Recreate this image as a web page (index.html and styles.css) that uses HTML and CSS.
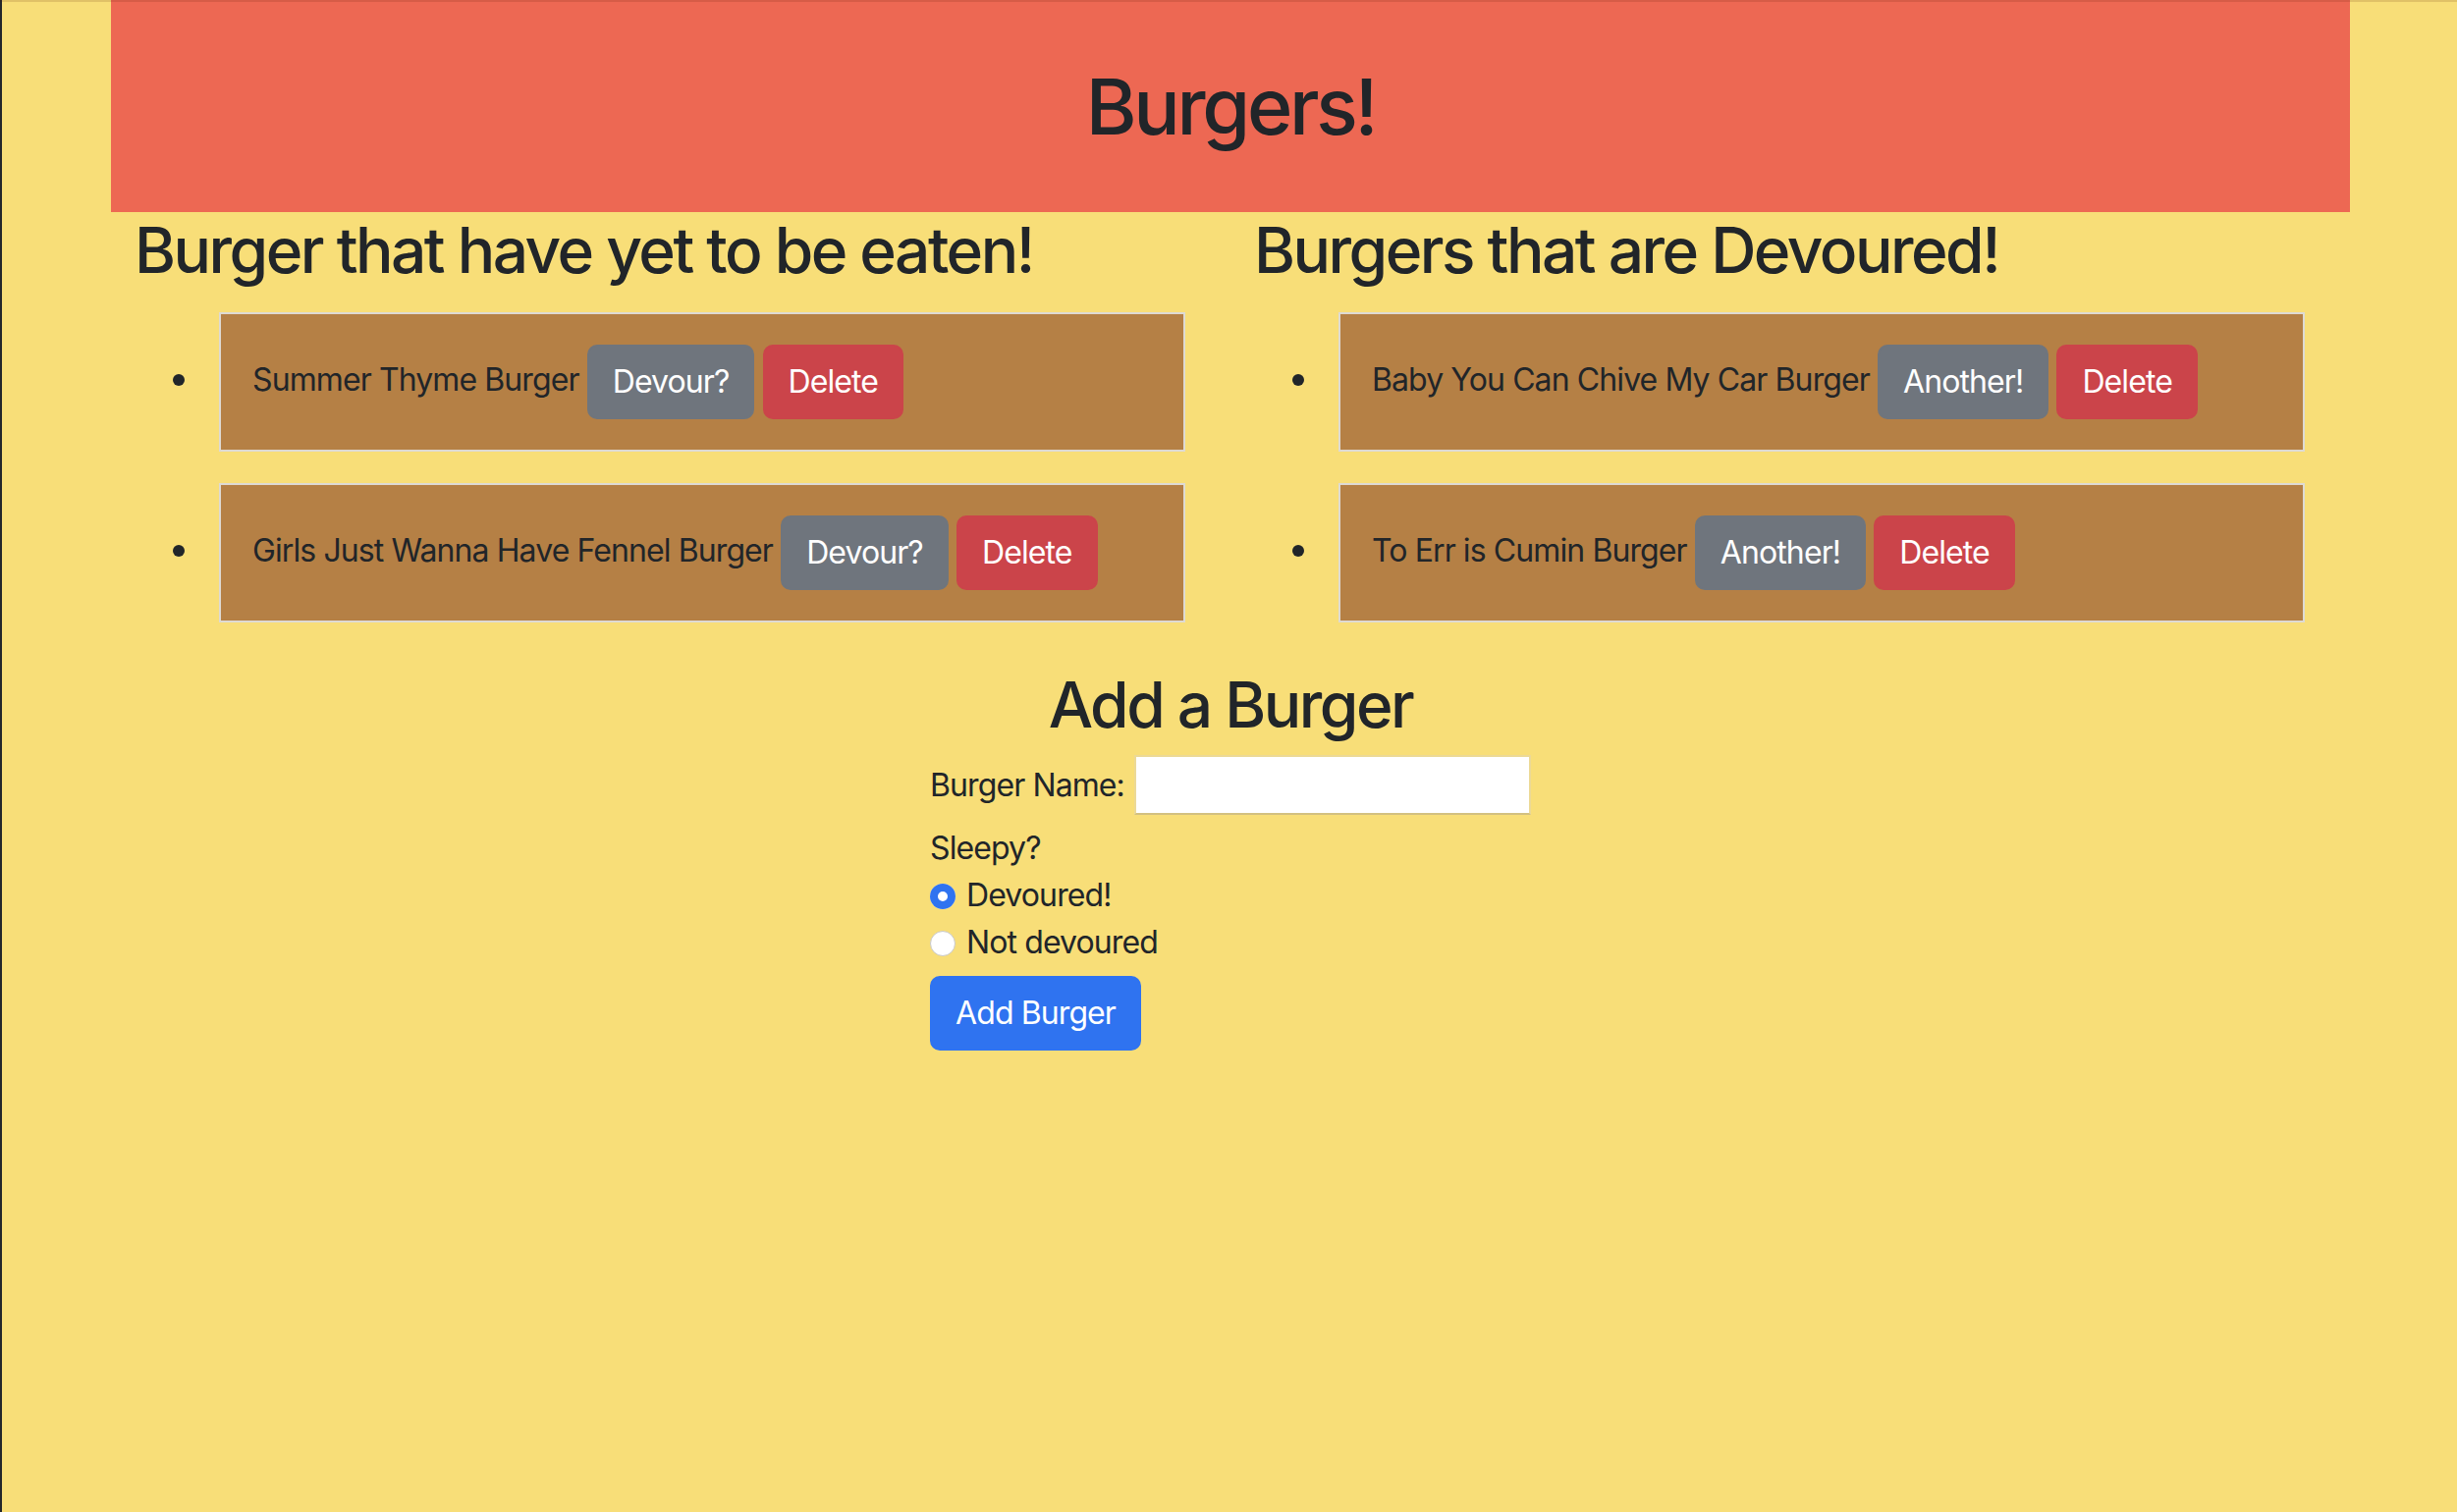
FILE: index.html
```html
<!DOCTYPE html>
<html lang="en">
<head>
<meta charset="utf-8">
<title>Burgers!</title>
<link rel="stylesheet" href="styles.css">
</head>
<body>
<div class="topline"></div>
<div class="container">
  <header class="jumbo">
    <h1 class="title">Burgers!</h1>
  </header>
  <div class="row">
    <section class="col">
      <h2 class="col-title">Burger that have yet to be eaten!</h2>
      <ul class="burger-list">
        <li><div class="burger">Summer Thyme Burger <button class="btn btn-secondary">Devour?</button> <button class="btn btn-danger">Delete</button></div></li>
        <li><div class="burger">Girls Just Wanna Have Fennel Burger <button class="btn btn-secondary">Devour?</button> <button class="btn btn-danger">Delete</button></div></li>
      </ul>
    </section>
    <section class="col">
      <h2 class="col-title">Burgers that are Devoured!</h2>
      <ul class="burger-list">
        <li><div class="burger">Baby You Can Chive My Car Burger <button class="btn btn-secondary">Another!</button> <button class="btn btn-danger">Delete</button></div></li>
        <li><div class="burger">To Err is Cumin Burger <button class="btn btn-secondary">Another!</button> <button class="btn btn-danger">Delete</button></div></li>
      </ul>
    </section>
  </div>
  <section class="add">
    <h2 class="add-title">Add a Burger</h2>
    <form class="add-form">
      <div class="name-row">
        <label class="name-label" for="bn">Burger Name:</label>
        <input class="name-input" id="bn" type="text">
      </div>
      <div class="line">Sleepy?</div>
      <div class="line"><input class="radio" type="radio" name="dev" id="d1" checked><label for="d1">Devoured!</label></div>
      <div class="line"><input class="radio" type="radio" name="dev" id="d2"><label for="d2">Not devoured</label></div>
      <button type="button" class="btn btn-primary add-btn">Add Burger</button>
    </form>
  </section>
</div>
</body>
</html>
```

FILE: styles.css
```css
html {
  background: #f8de78;
}

body {
  margin: 0;
  min-height: 1540px;
  padding-left: 2px;
  border-left: 2px solid #23262a;
  box-sizing: border-box;
  background: #f8de78;
  color: #212529;
  font-family: Inter, "Noto Sans", "Liberation Sans", sans-serif;
  font-size: 32px;
  line-height: 48px;
  letter-spacing: -0.9px;
}

.topline {
  position: fixed;
  top: 0;
  left: 0;
  right: 0;
  height: 2px;
  background: rgba(80, 20, 0, 0.14);
  z-index: 5;
}

.container {
  width: 2280px;
  margin: 0 auto;
}

.jumbo {
  background: #ed6853;
  padding: 60px 0;
  text-align: center;
}

.title {
  margin: 0;
  font-size: 79px;
  line-height: 96px;
  font-weight: 500;
  letter-spacing: -3.3px;
}

.row {
  display: grid;
  grid-template-columns: 1fr 1fr;
}

.col {
  padding: 0 24px;
}

.col-title {
  margin: 0 0 16px;
  font-size: 64px;
  line-height: 77px;
  font-weight: 500;
  letter-spacing: -2.5px;
}

.burger-list {
  margin: 0 0 45px;
  padding: 9px 0 0 64px;
  list-style: none;
}

.burger-list li {
  position: relative;
  margin-bottom: 32px;
}

.burger-list li::before {
  content: "";
  position: absolute;
  left: -25px;
  top: 63px;
  width: 12px;
  height: 12px;
  border-radius: 50%;
  background: #212529;
}

.burger-list li:last-child {
  margin-bottom: 0;
}

.burger {
  margin: 0 22px;
  padding: 31px 32px 31px;
  border: 2px solid #dedad3;
  background: #b58045;
}

.btn {
  display: inline-block;
  vertical-align: middle;
  padding: 12px 24px;
  border: 2px solid transparent;
  border-radius: 10px;
  font-family: inherit;
  font-size: 32px;
  line-height: 48px;
  font-weight: 400;
  letter-spacing: -0.9px;
  color: #fff;
  cursor: pointer;
}

.btn-secondary {
  background: #6f757d;
  border-color: #6f757d;
}

.btn-danger {
  background: #cb444a;
  border-color: #cb444a;
}

.btn-primary {
  background: #2f73f0;
  border-color: #2f73f0;
}

.add {
  text-align: center;
}

.add-title {
  margin: 0 0 13px;
  font-size: 64px;
  line-height: 77px;
  font-weight: 500;
  letter-spacing: -2.5px;
}

.add-form {
  width: fit-content;
  margin: 0 auto;
  text-align: left;
}

.name-row {
  display: flex;
  align-items: center;
  gap: 10px;
  margin-bottom: 10px;
}

.name-input {
  width: 404px;
  height: 61px;
  box-sizing: border-box;
  margin: 0;
  padding: 2px 6px;
  background: #fff;
  border: 2px solid #ecd996;
  border-bottom-color: #d3c080;
  font-family: inherit;
  font-size: 26px;
}

.line {
  height: 48px;
}

.radio {
  appearance: none;
  -webkit-appearance: none;
  width: 26px;
  height: 26px;
  margin: 0 11px 0 0;
  border-radius: 50%;
  background: #fff;
  border: 1px solid #c9c9c9;
  box-sizing: border-box;
  vertical-align: middle;
  position: relative;
  top: -1px;
}

.radio:checked {
  border: none;
  box-shadow: inset 0 0 0 8px #2f73f0;
}

.add-btn {
  margin-top: 10px;
}
```
